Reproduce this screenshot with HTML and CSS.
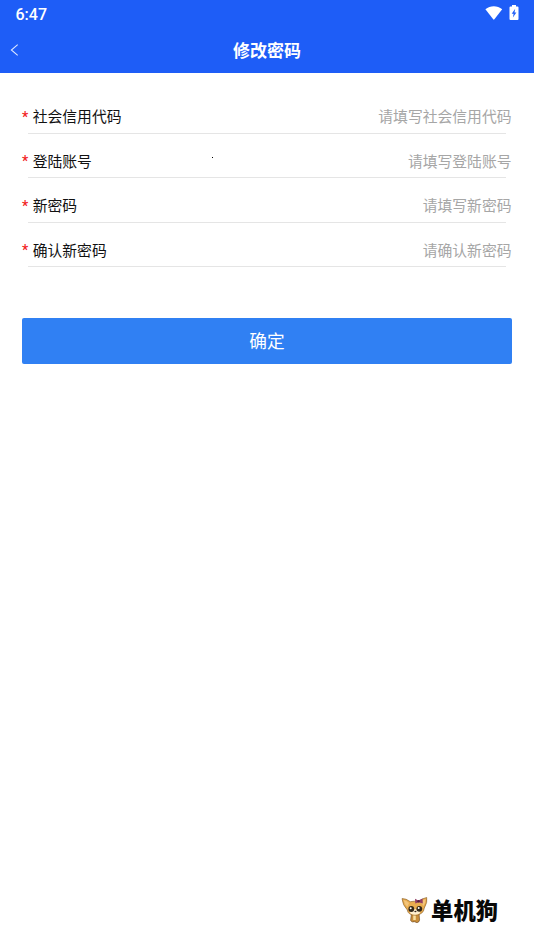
FILE: index.html
```html
<!DOCTYPE html>
<html lang="zh-CN">
<head>
<meta charset="utf-8">
<title>修改密码</title>
<link rel="stylesheet" href="styles.css">
</head>
<body>
<div class="screen">
  <header class="header">
    <div class="status">
      <span class="time">6:47</span>
      <div class="status-icons">
        <svg width="18" height="15" viewBox="0 0 18 15"><path d="M.4 4.200C5.300.2 12.300.2 17.200 4.200L9.400 14.300Q8.800 15 8.200 14.300Z" fill="#fff"/></svg>
        <svg width="10" height="16" viewBox="0 0 10 16"><path d="M3 0H7V1.500H8.500Q9.500 1.500 9.500 2.500V14Q9.500 15 8.500 15H1.500Q.5 15 .5 14V2.500Q.5 1.500 1.500 1.500H3Z" fill="#fff"/><path d="M6.200 3.800L2.700 8.800H4.600L3.900 12.600L7.400 7.600H5.500Z" fill="#1e5df7"/></svg>
      </div>
    </div>
    <div class="nav">
      <svg class="back" width="10" height="12" viewBox="0 0 10 12"><path d="M7.700.6L1.400 6L7.700 11.400" fill="none" stroke="#dce7ff" stroke-width="1.100"/></svg>
      <h1 class="title">修改密码</h1>
    </div>
  </header>
  <main class="form">
    <div class="row"><span class="star">*</span><label class="label">社会信用代码</label><span class="hint">请填写社会信用代码</span></div>
    <div class="row"><span class="star">*</span><label class="label">登陆账号</label><span class="hint">请填写登陆账号</span><i class="speck"></i></div>
    <div class="row"><span class="star">*</span><label class="label">新密码</label><span class="hint">请填写新密码</span></div>
    <div class="row"><span class="star">*</span><label class="label">确认新密码</label><span class="hint">请确认新密码</span></div>
    <button class="submit" type="button">确定</button>
  </main>
  <footer class="brand">
    <svg width="28" height="28" viewBox="0 0 28 28">
      <path d="M10.500 17L9.600 24.500Q11 26.700 13.500 25.700L16 26.700Q18.500 26 18.600 24L18 17Z" fill="#c98f3c" stroke="#64401c" stroke-width=".6"/>
      <path d="M13.500 18.500V24" stroke="#f8dfa0" stroke-width="2.500"/>
      <path d="M1 2.600Q5 2.300 9.300 5.700Q13 4.700 17.600 5.700Q21 2.300 25.700 1.500Q26.800 6 23.300 12Q22.500 18.700 14.500 19.200Q7 19.300 6.200 13.800Q1.700 9.300 1 2.600Z" fill="#e9ad50" stroke="#805522" stroke-width=".6"/>
      <path d="M2.600 4Q6 4.800 8 7L6.300 11Q3.400 8 2.600 4ZM24.500 3Q21.500 4 20.300 7L22.500 10Q24.500 7 24.500 3Z" fill="#f3c57b"/>
      <ellipse cx="14" cy="16" rx="5" ry="2.800" fill="#fff0cf"/>
      <circle cx="10.300" cy="13" r="2.900" fill="#302719"/><circle cx="18.300" cy="12.800" r="2.900" fill="#302719"/>
      <circle cx="9.700" cy="12.200" r="1" fill="#fff"/><circle cx="17.700" cy="12" r="1" fill="#fff"/>
      <ellipse cx="14.400" cy="15.500" rx="1.100" ry=".7" fill="#33251b"/>
      <path d="M14 2.800L17.300 4.400L21.500 2.600L21.800 7.400L17.600 6.200L14.300 7.400Z" fill="#913d64"/><circle cx="17.500" cy="5.200" r="1.200" fill="#51213d"/>
    </svg>
    <span class="brand-name">单机狗</span>
  </footer>
</div>
</body>
</html>
```
FILE: styles.css
```css
* { box-sizing: border-box; }
body {
  margin: 0;
  background: #fff;
  font-family: Roboto, "Noto Sans CJK SC", sans-serif;
}
svg { display: block; flex: none; }
.screen { height: 950px; display: flex; flex-direction: column; overflow: hidden; }
.header { height: 72.500px; background: #1e5df7; color: #fff; flex: none; }
.status { height: 28px; display: flex; justify-content: space-between; padding: 0 15px 0 15.500px; }
.time { font-size: 16px; font-weight: 500; line-height: 30px; }
.status-icons { display: flex; gap: 6px; padding-top: 5px; }
.nav { height: 44px; display: grid; grid-template-columns: 30px 1fr 30px; align-items: center; }
.back { margin: 0 0 2px 10px; }
.title { margin: 0; font-size: 17px; line-height: 44px; font-weight: 700; text-align: center; padding-top: 1px; }
.form { padding: 16.500px 22px 0; }
.row {
  position: relative;
  height: 44.500px;
  display: flex;
  align-items: center;
  padding-top: 12px;
  font-size: 14.800px;
  line-height: 22px;
  color: #111;
}
.row::after { content: ""; position: absolute; left: 6px; right: 6px; bottom: 0; height: 1px; background: #e5e5e5; }
.star { width: 10.700px; color: #f21c1c; font-weight: 500; font-size: 14px; padding-bottom: 1px; }
.hint { margin-left: auto; margin-right: 0.500px; color: #a6a6a6; font-weight: 400; }
.speck { position: absolute; left: 190px; top: 23px; width: 1px; height: 1px; background: #000; }
.submit {
  display: block;
  width: 100%;
  height: 46px;
  margin-top: 51px;
  padding: 2px 0 0;
  border: 0;
  border-radius: 2px;
  background: #3080f3;
  color: #fff;
  font: 400 17.700px/44px Roboto, "Noto Sans CJK SC", sans-serif;
}
.brand { display: flex; align-items: center; gap: 2px; margin: auto 36px 25px auto; height: 30px; }
.brand-name { font-size: 22.300px; line-height: 30px; padding-top: 2px; font-weight: 900; color: #080808; }
```
